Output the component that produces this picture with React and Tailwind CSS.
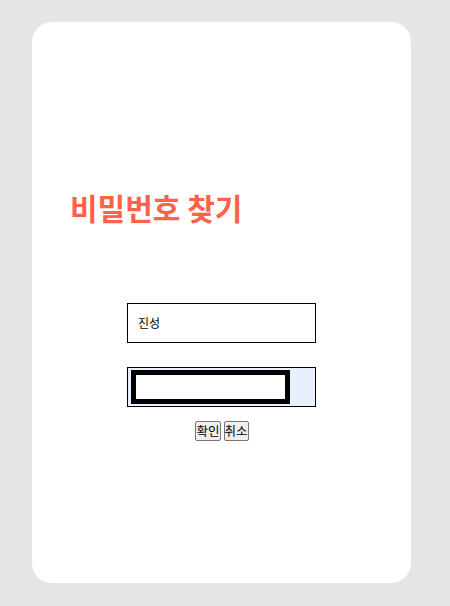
import React from 'react';

function App() {
  return (
    <div className="min-h-[606px] w-[450px] bg-[#e5e5e5] pt-[22px] font-['Noto_Sans_CJK_KR','Noto_Sans',sans-serif]">
      <div className="ml-[32px] flex h-[561px] w-[379px] flex-col rounded-[20px] bg-white">
        {/* Title */}
        <h1 className="mt-[164px] pl-[38px] text-[30px] font-bold leading-[42px] text-[#ff6347]">
          비밀번호 찾기
        </h1>

        {/* Form */}
        <div className="mt-[75px] flex flex-col items-center">
          <div className="flex h-[40px] w-[189px] items-center border border-black pl-[10px] text-[12px] text-black">
            진성
          </div>
          <div className="mt-[24px] flex h-[40px] w-[189px] items-center border border-black bg-[#e8f0fe] pl-[3px]">
            <div className="h-[34px] w-[159px] border-[5px] border-black bg-white"></div>
          </div>
          <div className="mt-[14px] flex gap-[3px] pl-[1px]">
            <button className="rounded-[2px] border border-[#767676] bg-[#efefef] px-0 text-[12.5px] leading-[18px] text-black">
              확인
            </button>
            <button className="rounded-[2px] border border-[#767676] bg-[#efefef] px-0 text-[12.5px] leading-[18px] text-black">
              취소
            </button>
          </div>
        </div>
      </div>
    </div>
  );
}

export default App;
